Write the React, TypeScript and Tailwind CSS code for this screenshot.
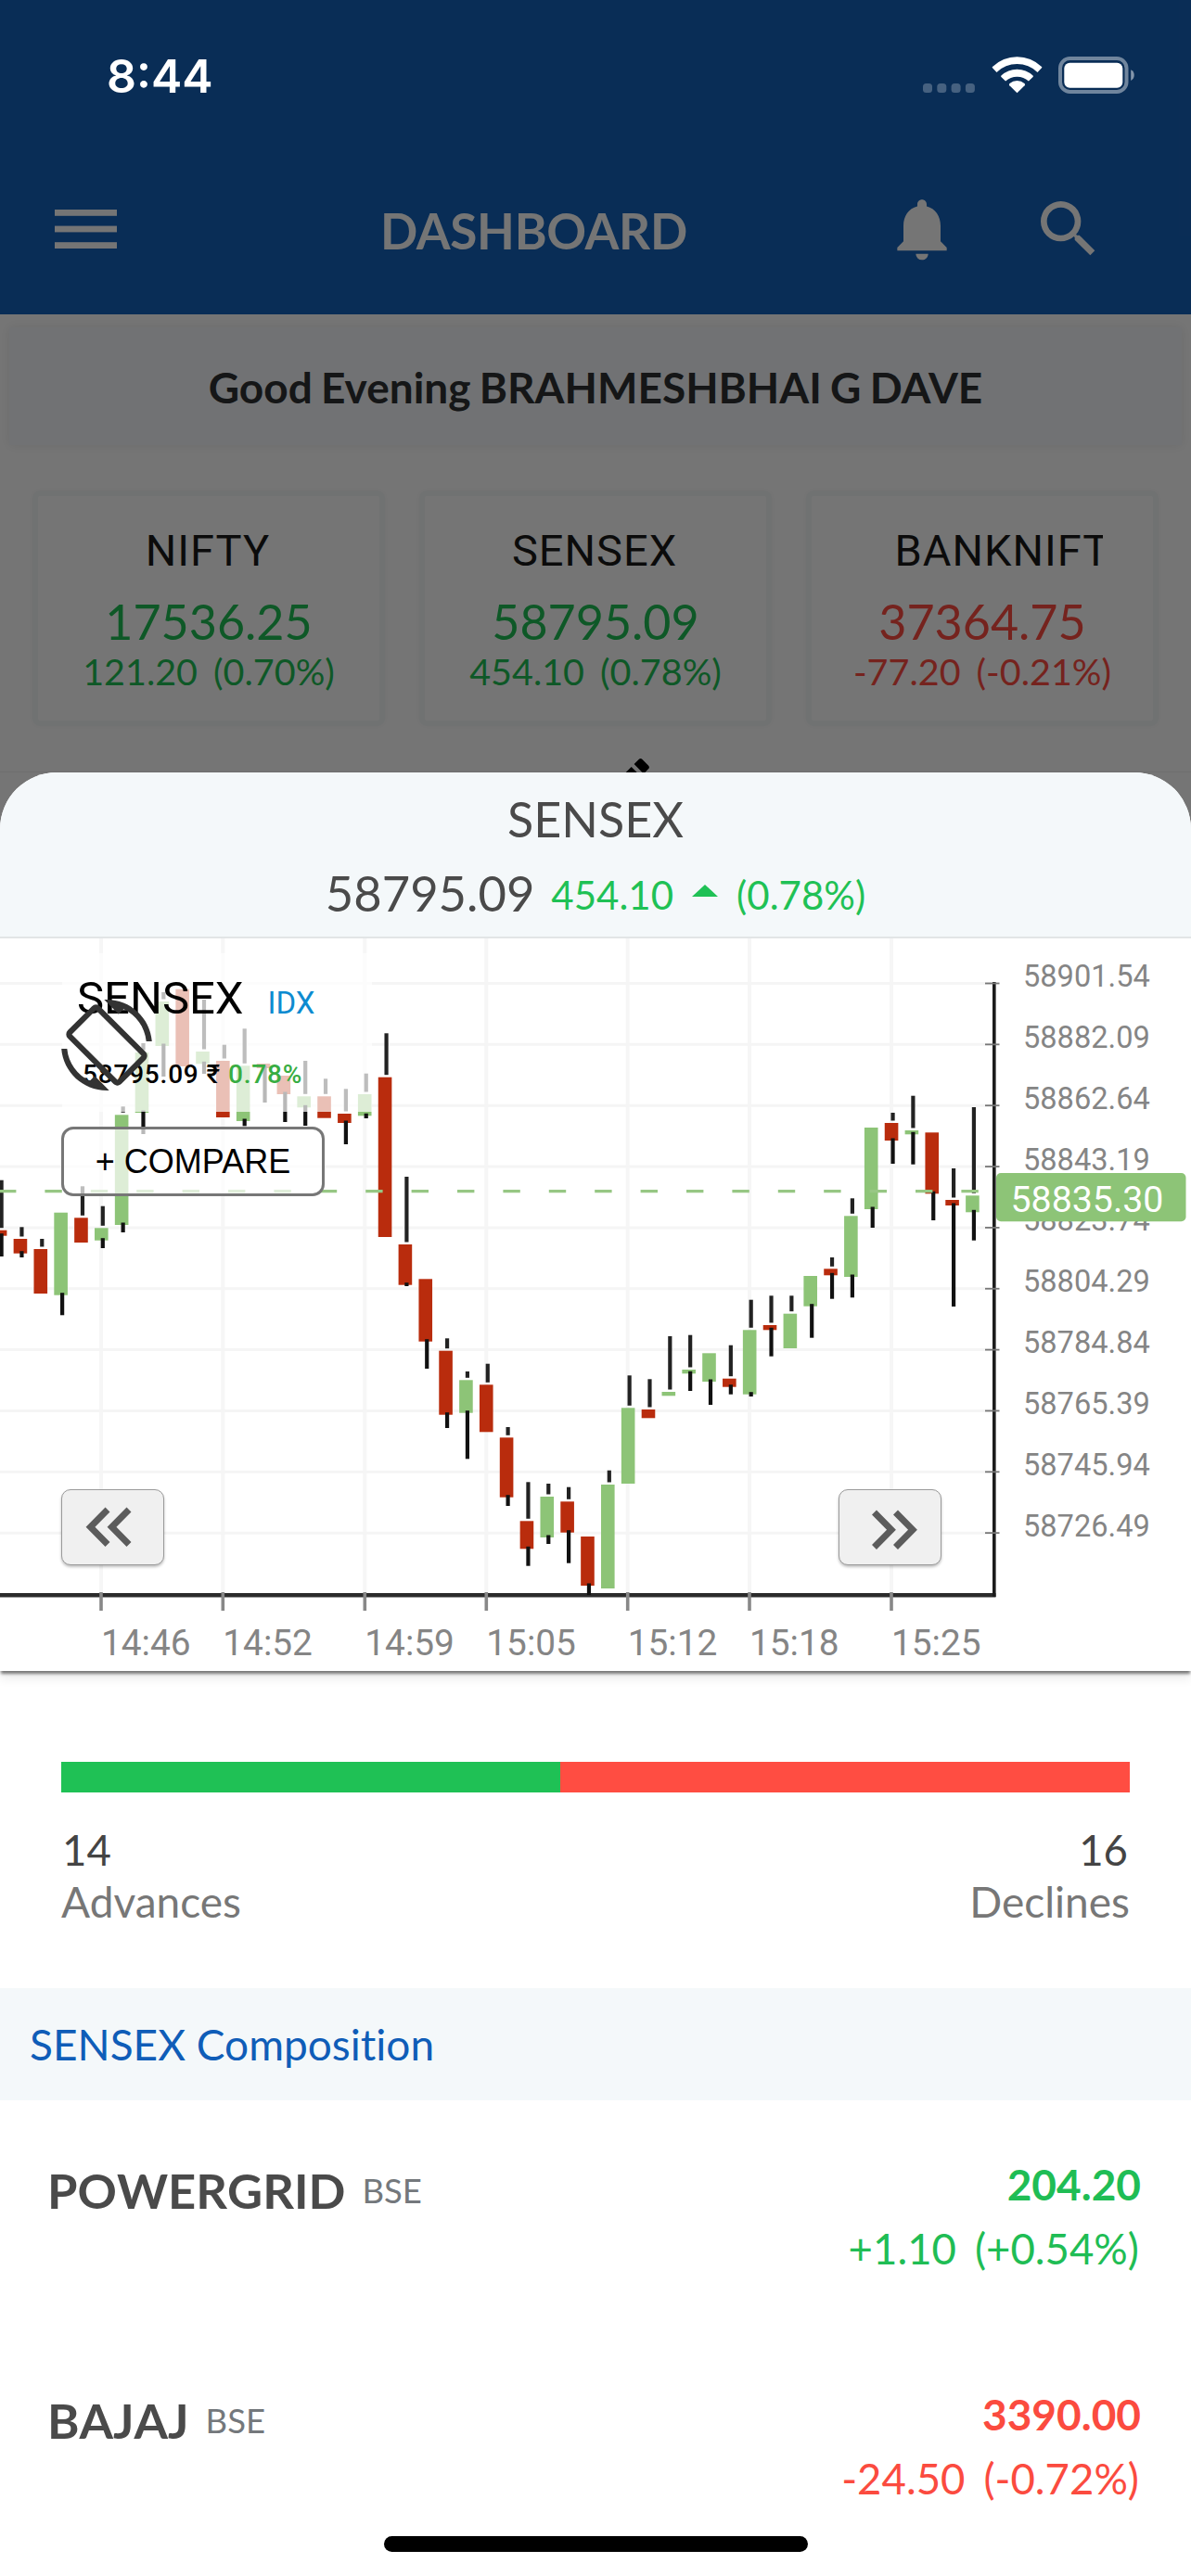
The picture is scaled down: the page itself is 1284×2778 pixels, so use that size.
import { FC } from 'react';
import { MdEdit, MdNotifications, MdScreenRotation, MdSearch } from 'react-icons/md';

interface IndexCardProps {
  name: string;
  value: string;
  change: string;
  percent: string;
  up: boolean;
}

interface StockRowProps {
  symbol: string;
  price: string;
  change: string;
  percent: string;
  up: boolean;
}

// [up, high, bodyTop, bodyBottom, low]
type Candle = [number, number, number, number, number];

const indices: IndexCardProps[] = [
  { name: 'NIFTY', value: '17536.25', change: '121.20', percent: '(0.70%)', up: true },
  { name: 'SENSEX', value: '58795.09', change: '454.10', percent: '(0.78%)', up: true },
  { name: 'BANKNIFTY', value: '37364.75', change: '-77.20', percent: '(-0.21%)', up: false }
];

const stocks: StockRowProps[] = [
  { symbol: 'POWERGRID', price: '204.20', change: '+1.10', percent: '(+0.54%)', up: true },
  { symbol: 'BAJAJ', price: '3390.00', change: '-24.50', percent: '(-0.72%)', up: false }
];

const candles: Candle[] = [
  [0, 1272.7, 1326.7, 1332.7, 1355],
  [0, 1323.3, 1336, 1351.7, 1356],
  [0, 1336, 1347, 1395, 1395],
  [1, 1307.7, 1307.7, 1396.7, 1418.3],
  [0, 1279.3, 1313.3, 1340, 1340],
  [1, 1300.7, 1324.3, 1337.7, 1346],
  [1, 1193.3, 1202.3, 1321, 1329],
  [1, 1125, 1135, 1200, 1223],
  [1, 1070, 1080, 1128, 1161],
  [0, 1066.7, 1066.7, 1150, 1150],
  [1, 1078, 1134, 1147.3, 1158],
  [0, 1126.7, 1144, 1205, 1205],
  [1, 1109.3, 1149.3, 1209, 1214.3],
  [0, 1147, 1147, 1152, 1189],
  [0, 1160, 1160, 1180, 1210],
  [1, 1144, 1182.3, 1194.3, 1214],
  [0, 1163.3, 1182.3, 1205.7, 1205.7],
  [0, 1174.3, 1201, 1211, 1234],
  [1, 1157.7, 1180, 1203.3, 1206],
  [0, 1114.3, 1161.7, 1334, 1334],
  [0, 1269, 1342, 1385.7, 1387],
  [0, 1379.3, 1379.3, 1446.7, 1476],
  [0, 1443.3, 1456.7, 1525.7, 1540],
  [1, 1479, 1488.3, 1523.7, 1573.3],
  [0, 1470.7, 1493.3, 1544.3, 1544.3],
  [0, 1539, 1550.3, 1614.7, 1624],
  [0, 1598.3, 1640.3, 1670.3, 1688.7],
  [1, 1600, 1614, 1658, 1665],
  [0, 1603.7, 1619.3, 1652.7, 1685.7],
  [0, 1657, 1657, 1710, 1720],
  [1, 1585.7, 1601, 1713, 1713],
  [1, 1483.3, 1518.3, 1600, 1600],
  [0, 1487.3, 1520, 1529.3, 1529.3],
  [1, 1441, 1501, 1505.3, 1505.3],
  [1, 1439.7, 1477, 1481.3, 1500],
  [1, 1459.3, 1459.3, 1490, 1515],
  [0, 1450.7, 1486.7, 1495.7, 1503.7],
  [1, 1401.7, 1434.3, 1503.7, 1506],
  [0, 1397.3, 1429, 1434.3, 1462.7],
  [1, 1397.3, 1416.7, 1454, 1454],
  [1, 1376, 1376, 1408.7, 1442.7],
  [0, 1356, 1368.3, 1375.3, 1400.7],
  [1, 1292.3, 1311.3, 1377, 1399.3],
  [1, 1216, 1216, 1304, 1324],
  [0, 1200, 1211, 1230, 1255],
  [1, 1181.7, 1219, 1223.3, 1255.7],
  [0, 1221.3, 1221.3, 1287.3, 1316],
  [0, 1260, 1294, 1300, 1409],
  [1, 1194, 1289.3, 1307.3, 1337.7]
];

const priceLabels = [
  '58901.54',
  '58882.09',
  '58862.64',
  '58843.19',
  '58823.74',
  '58804.29',
  '58784.84',
  '58765.39',
  '58745.94',
  '58726.49'
];

const timeLabels = [
  { x: 109, label: '14:46' },
  { x: 240.3, label: '14:52' },
  { x: 393.3, label: '14:59' },
  { x: 524.3, label: '15:05' },
  { x: 676.7, label: '15:12' },
  { x: 808, label: '15:18' },
  { x: 961, label: '15:25' }
];

const StatusBar: FC = () => (
  <div className="flex h-[155px] items-start pt-[57px] pr-[60px] pl-[115px] text-white">
    <span className="font-['Inter',sans-serif] text-[50px] leading-none font-semibold">8:44</span>
    <svg className="mt-[3px] ml-auto" width="230" height="42" viewBox="0 0 230 42">
      {[1, 16.3, 31.6, 46.9].map(x => (
        <rect key={x} x={x} y="30" width="10" height="10" rx="3.5" fill="#fff" fillOpacity="0.25" />
      ))}
      <g transform="translate(75.5 0)" fill="#fff">
        <path d="M27 40.3 L18.9 32.2 A1.5 1.5 0 0 1 19 30 A12.5 12.5 0 0 1 35 30 A1.5 1.5 0 0 1 35.1 32.2 Z" />
        <path d="M14.6 27.6 L9.9 22.9 A1 1 0 0 1 9.9 21.5 A25 25 0 0 1 44.1 21.5 A1 1 0 0 1 44.1 22.9 L39.4 27.6 A18 18 0 0 0 14.6 27.6 Z" />
        <path d="M5 18 L0.5 13.3 A1 1 0 0 1 0.5 11.9 A38 38 0 0 1 53.5 11.9 A1 1 0 0 1 53.5 13.3 L49 18 A31.5 31.5 0 0 0 5 18 Z" />
      </g>
      <rect x="149" y="3" width="71.5" height="36" rx="10.5" fill="none" stroke="#fff" strokeOpacity="0.42" strokeWidth="4" />
      <rect x="153.3" y="7.7" width="63" height="27" rx="6" fill="#fff" />
      <path d="M225.2 15.3 a6.5 6.5 0 0 1 0 11.6 z" fill="#fff" fillOpacity="0.5" />
    </svg>
  </div>
);

const Toolbar: FC = () => (
  <div className="flex h-[184px] items-center pr-[92px] pl-[59px] text-white">
    <svg width="67" height="42" viewBox="0 0 67 42" fill="#fff">
      <rect width="67" height="6.8" />
      <rect y="17.6" width="67" height="6.8" />
      <rect y="35.2" width="67" height="6.8" />
    </svg>
    <h1 className="mt-[3px] ml-[284px] text-[53px] leading-none font-bold tracking-[-0.3px]">DASHBOARD</h1>
    <MdNotifications className="ml-auto" size={80} />
    <MdSearch className="ml-[78px]" size={80} />
  </div>
);

const IndexCard: FC<IndexCardProps> = ({ name, value, change, percent, up }) => (
  <div className="flex h-[254px] flex-col items-center overflow-hidden rounded-lg border-[6px] border-[#f4f8f9] pt-[35px] shadow-[0_0_6px_rgba(0,0,0,0.04)]">
    <div
      className={`mr-[2px] font-['Roboto',sans-serif] text-[47px] leading-none tracking-[1px] whitespace-nowrap text-[#1a1a1a] ${
        name.length > 7 ? 'ml-[37px] w-[224px] overflow-hidden' : ''
      }`}
    >
      {name}
    </div>
    <div className={`mt-[27px] text-[52px] leading-none ${up ? 'text-[#1fc155]' : 'text-[#ff4d42]'}`}>{value}</div>
    <div className={`mt-[8px] flex gap-[17px] text-[39.5px] leading-none whitespace-nowrap ${up ? 'text-[#1fc155]' : 'text-[#ff4d42]'}`}>
      <span>{change}</span>
      <span>{percent}</span>
    </div>
  </div>
);

const Chart: FC = () => (
  <section className="relative h-[790px] bg-white shadow-[0_4px_3px_-1px_rgba(0,0,0,0.5),0_9px_10px_rgba(0,0,0,0.07)]">
    <svg className="block" width="1284" height="790" viewBox="0 1012 1284 790">
      {timeLabels.map(({ x }) => (
        <line key={x} x1={x} x2={x} y1="1012" y2="1719" stroke="#f6f6f6" strokeWidth="4" />
      ))}
      {priceLabels.map((label, i) => (
        <line key={label} x1="0" x2="1070" y1={1060.5 + i * 65.85} y2={1060.5 + i * 65.85} stroke="#f5f5f5" strokeWidth="3" />
      ))}

      <line x1="0" x2="1073.5" y1="1720.2" y2="1720.2" stroke="#2b2b2b" strokeWidth="4.5" />
      <line x1="1071.8" x2="1071.8" y1="1059" y2="1722" stroke="#1c1c1c" strokeWidth="3.6" />

      {candles.map(([up, high, top, bottom, low], i) => {
        const x = i * 21.84;
        return (
          <g key={i}>
            {high < top && <line x1={x + 1.6} x2={x + 1.6} y1={high} y2={top - 2.5} stroke="#222" strokeWidth="4.2" />}
            <rect x={x - 7.2} y={top} width="14.6" height={bottom - top} fill={up ? '#8dc477' : '#b92c0d'} />
            {low > bottom && <line x1={x + 1.6} x2={x + 1.6} y1={bottom - 2.5} y2={low} stroke="#111" strokeWidth="4.2" />}
          </g>
        );
      })}

      <line x1="-1" x2="1056" y1="1284.6" y2="1284.6" stroke="#97c784" strokeWidth="3.2" strokeDasharray="18.4 31" />

      {timeLabels.map(({ x, label }) => (
        <g key={label}>
          <line x1={x} x2={x} y1="1717" y2="1737" stroke="#888" strokeWidth="3.6" />
          <text x={x} y="1785.2" fontSize="38.8" fill="#858585" fontFamily="Roboto, sans-serif">
            {label}
          </text>
        </g>
      ))}
      {priceLabels.map((label, i) => (
        <g key={label}>
          <line x1="1062" x2="1077.5" y1={1060.5 + i * 65.85} y2={1060.5 + i * 65.85} stroke="#777" strokeWidth="1.8" />
          <text x="1103" y={1064 + i * 65.85} fontSize="32.6" fill="#858585" fontFamily="Roboto, sans-serif">
            {label}
          </text>
        </g>
      ))}
      <rect x="1074" y="1265" width="204.5" height="52.3" rx="5" fill="#8dc477" />
      <text x="1089.5" y="1307.3" fontSize="39.3" fill="#fff" fontFamily="Roboto, sans-serif">
        58835.30
      </text>
    </svg>

    <div className="absolute top-[16px] left-[67px] h-[171px] w-[334px] bg-white/70 pt-[24px] pl-[16px] font-['Roboto',sans-serif] text-black">
      <div className="flex items-baseline gap-[26px] leading-none">
        <span className="text-[49px] leading-none">SENSEX</span>
        <span className="text-[33px] leading-none text-[#0d8bd0]">IDX</span>
      </div>
      <div className="mt-[44px] ml-[6px] flex items-baseline gap-[8px] text-[28px] leading-none font-medium tracking-[0.8px] whitespace-nowrap">
        <span>58795.09</span>
        <span>₹</span>
        <span className="text-[#38ad42]">0.78%</span>
      </div>
    </div>
    <MdScreenRotation className="absolute top-[66px] left-[66px] text-[#333]" size={98} />
    <button className="absolute top-[203px] left-[66px] h-[75px] w-[284px] rounded-[13px] border-3 border-[#777] bg-white/70 font-['Liberation_Sans',Arial,sans-serif] text-[36px] leading-none text-black">
      + COMPARE
    </button>
    <button className="absolute top-[594px] left-[66px] h-[82px] w-[111px] rounded-[10px] border border-[#9a9a9a] bg-[#f0f0f0] shadow-[0_2px_3px_rgba(0,0,0,0.25)]">
      <svg width="109" height="80" viewBox="0 0 109 80" fill="none" stroke="#5c5c5c" strokeWidth="7">
        <path d="M49 21 L30.5 39.7 L49 58.5 M72 21 L53.5 39.7 L72 58.5" />
      </svg>
    </button>
    <button className="absolute top-[594px] left-[904px] h-[82px] w-[111px] rounded-[10px] border border-[#9a9a9a] bg-[#f0f0f0] shadow-[0_2px_3px_rgba(0,0,0,0.25)]">
      <svg width="109" height="80" viewBox="0 0 109 80" fill="none" stroke="#5c5c5c" strokeWidth="7">
        <path d="M37.5 24 L56 42.7 L37.5 61.5 M60.5 24 L79 42.7 L60.5 61.5" />
      </svg>
    </button>
  </section>
);

const StockRow: FC<StockRowProps> = ({ symbol, price, change, percent, up }) => (
  <div className="flex h-[248px] items-start justify-between pr-[54px] pl-[51px]">
    <div className="flex gap-[18px]">
      <span className="mt-[4px] text-[52.5px] leading-none font-bold text-[#4a4a4a] [font-kerning:none]">{symbol}</span>
      <span className="mt-[12px] text-[36.5px] leading-none text-[#74787c]">BSE</span>
    </div>
    <div className={`flex flex-col items-end ${up ? 'text-[#1fbd55]' : 'text-[#fb4b3f]'}`}>
      <span className="mt-px text-[46px] leading-none font-bold">{price}</span>
      <span className="mt-[23px] mr-[2px] flex gap-[20px] text-[45.5px] leading-none">
        <span>{change}</span>
        <span>{percent}</span>
      </span>
    </div>
  </div>
);

export default function App() {
  return (
    <div className="relative h-[2778px] w-[1284px] overflow-hidden bg-white font-['Lato',sans-serif]">
      <div className="relative h-[894px] bg-white">
        <header className="h-[339px] bg-[#1562bc] pt-[155px]">
          <Toolbar />
        </header>
        <div className="mx-[10px] mt-[14px] flex h-[127px] items-center justify-center bg-[#f6f9fc] pt-[2px] text-[46px] leading-none font-bold text-[#2e3133] shadow-[0_0_12px_rgba(0,0,0,0.08)] [word-spacing:-2px]">
          Good Evening BRAHMESHBHAI G DAVE
        </div>
        <div className="mt-[49px] grid grid-cols-3 gap-[37px] px-[35px]">
          {indices.map(item => (
            <IndexCard key={item.name} {...item} />
          ))}
        </div>
        <div className="mt-[49px] h-px bg-[#f0f0f0] shadow-[0_0_2px_#fff]" />
        <MdEdit className="absolute top-[810px] left-[642px] text-black" size={66} />
        <div className="absolute inset-0 bg-black/54" />
        {/* status bar stays above the modal backdrop */}
        <div className="absolute inset-x-0 top-0">
          <StatusBar />
        </div>
      </div>

      <div className="relative -mt-[61px] overflow-hidden rounded-t-[61px] bg-white">
        <div className="flex h-[179px] flex-col items-center border-b-2 border-[#e2e5e6] bg-[#f4f8fa] pt-[24px] text-[#4a4a4a]">
          <h2 className="text-[52px] leading-none">SENSEX</h2>
          <div className="mt-[28px] flex items-baseline text-[42px] leading-none text-[#1fc155]">
            <span className="text-[52.5px] leading-none text-[#4a4a4a]">58795.09</span>
            <span className="ml-[18px] -translate-y-[2px]">454.10</span>
            <svg className="mx-[20px] -translate-y-[16px]" width="28" height="13" viewBox="0 0 28 13" fill="#1fc155">
              <path d="M14 0 L28 13 H0 Z" />
            </svg>
            <span className="-translate-y-[2px]">(0.78%)</span>
          </div>
        </div>

        <Chart />

        <section className="h-[342px] px-[66px] pt-[98px]">
          <div className="flex h-[33px]">
            <div className="w-[538px] bg-[#1fc155]" />
            <div className="flex-1 bg-[#ff4d42]" />
          </div>
          <div className="mt-[39px] flex justify-between pr-[2px] pl-px text-[45.5px] leading-none text-[#444]">
            <span>14</span>
            <span>16</span>
          </div>
          <div className="mt-[10.5px] flex justify-between text-[46px] leading-none text-[#777]">
            <span>Advances</span>
            <span>Declines</span>
          </div>
        </section>

        <div className="flex h-[121px] items-center bg-[#f4f8fa] pt-px pl-[32px] text-[46px] leading-none text-[#0f5db8] [font-variant-ligatures:none]">
          SENSEX Composition
        </div>

        <section className="pt-[67px]">
          {stocks.map(stock => (
            <StockRow key={stock.symbol} {...stock} />
          ))}
        </section>
      </div>

      <div className="absolute bottom-[26px] left-[414px] h-[17px] w-[457px] rounded-full bg-black" />
    </div>
  );
}
